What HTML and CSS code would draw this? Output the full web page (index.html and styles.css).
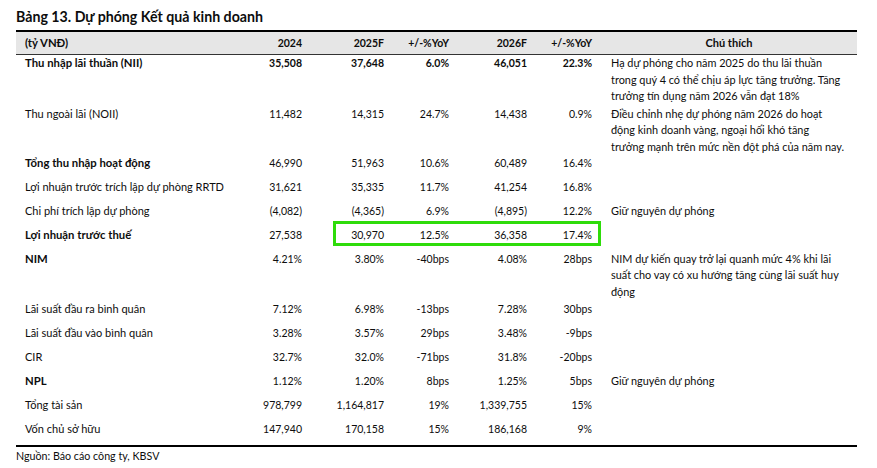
FILE: index.html
```html
<!DOCTYPE html>
<html lang="vi">
<head>
<meta charset="utf-8">
<title>Bảng 13. Dự phóng Kết quả kinh doanh</title>
<link rel="stylesheet" href="styles.css">
</head>
<body>
<div class="page">
  <h1 class="title">Bảng 13. Dự phóng Kết quả kinh doanh</h1>
  <div class="table">
    <div class="row head">
      <div class="c lab">(tỷ VNĐ)</div>
      <div class="c num">2024</div>
      <div class="c num">2025F</div>
      <div class="c num">+/-%YoY</div>
      <div class="c num">2026F</div>
      <div class="c num">+/-%YoY</div>
      <div class="c note center">Chú thích</div>
    </div>
    <div class="row multi bold">
      <div class="c lab b">Thu nhập lãi thuần (NII)</div>
      <div class="c num">35,508</div>
      <div class="c num">37,648</div>
      <div class="c num">6.0%</div>
      <div class="c num">46,051</div>
      <div class="c num">22.3%</div>
      <div class="c note">Hạ dự phóng cho năm 2025 do thu lãi thuần<br>trong quý 4 có thể chịu áp lực tăng trưởng. Tăng<br>trưởng tín dụng năm 2026 vẫn đạt 18%</div>
    </div>
    <div class="row multi tight">
      <div class="c lab">Thu ngoài lãi (NOII)</div>
      <div class="c num">11,482</div>
      <div class="c num">14,315</div>
      <div class="c num">24.7%</div>
      <div class="c num">14,438</div>
      <div class="c num">0.9%</div>
      <div class="c note">Điều chỉnh nhẹ dự phóng năm 2026 do hoạt<br>động kinh doanh vàng, ngoại hối khó tăng<br>trưởng mạnh trên mức nền đột phá của năm nay.</div>
    </div>
    <div class="row">
      <div class="c lab b">Tổng thu nhập hoạt động</div>
      <div class="c num">46,990</div>
      <div class="c num">51,963</div>
      <div class="c num">10.6%</div>
      <div class="c num">60,489</div>
      <div class="c num">16.4%</div>
      <div class="c note"></div>
    </div>
    <div class="row">
      <div class="c lab">Lợi nhuận trước trích lập dự phòng RRTD</div>
      <div class="c num">31,621</div>
      <div class="c num">35,335</div>
      <div class="c num">11.7%</div>
      <div class="c num">41,254</div>
      <div class="c num">16.8%</div>
      <div class="c note"></div>
    </div>
    <div class="row">
      <div class="c lab">Chi phí trích lập dự phòng</div>
      <div class="c num">(4,082)</div>
      <div class="c num">(4,365)</div>
      <div class="c num">6.9%</div>
      <div class="c num">(4,895)</div>
      <div class="c num">12.2%</div>
      <div class="c note">Giữ nguyên dự phóng</div>
    </div>
    <div class="row marked">
      <div class="c lab b">Lợi nhuận trước thuế</div>
      <div class="c num">27,538</div>
      <div class="c num">30,970</div>
      <div class="c num">12.5%</div>
      <div class="c num">36,358</div>
      <div class="c num">17.4%</div>
      <div class="c note"></div>
      <div class="highlight"></div>
    </div>
    <div class="row multi">
      <div class="c lab b">NIM</div>
      <div class="c num">4.21%</div>
      <div class="c num">3.80%</div>
      <div class="c num">-40bps</div>
      <div class="c num">4.08%</div>
      <div class="c num">28bps</div>
      <div class="c note">NIM dự kiến quay trở lại quanh mức 4% khi lãi<br>suất cho vay có xu hướng tăng cùng lãi suất huy<br>động</div>
    </div>
    <div class="row">
      <div class="c lab">Lãi suất đầu ra bình quân</div>
      <div class="c num">7.12%</div>
      <div class="c num">6.98%</div>
      <div class="c num">-13bps</div>
      <div class="c num">7.28%</div>
      <div class="c num">30bps</div>
      <div class="c note"></div>
    </div>
    <div class="row">
      <div class="c lab">Lãi suất đầu vào bình quân</div>
      <div class="c num">3.28%</div>
      <div class="c num">3.57%</div>
      <div class="c num">29bps</div>
      <div class="c num">3.48%</div>
      <div class="c num">-9bps</div>
      <div class="c note"></div>
    </div>
    <div class="row">
      <div class="c lab">CIR</div>
      <div class="c num">32.7%</div>
      <div class="c num">32.0%</div>
      <div class="c num">-71bps</div>
      <div class="c num">31.8%</div>
      <div class="c num">-20bps</div>
      <div class="c note"></div>
    </div>
    <div class="row">
      <div class="c lab b">NPL</div>
      <div class="c num">1.12%</div>
      <div class="c num">1.20%</div>
      <div class="c num">8bps</div>
      <div class="c num">1.25%</div>
      <div class="c num">5bps</div>
      <div class="c note">Giữ nguyên dự phóng</div>
    </div>
    <div class="row">
      <div class="c lab">Tổng tài sản</div>
      <div class="c num">978,799</div>
      <div class="c num">1,164,817</div>
      <div class="c num">19%</div>
      <div class="c num">1,339,755</div>
      <div class="c num">15%</div>
      <div class="c note"></div>
    </div>
    <div class="row last">
      <div class="c lab">Vốn chủ sở hữu</div>
      <div class="c num">147,940</div>
      <div class="c num">170,158</div>
      <div class="c num">15%</div>
      <div class="c num">186,168</div>
      <div class="c num">9%</div>
      <div class="c note"></div>
    </div>
  </div>
  <p class="source">Nguồn: Báo cáo công ty, KBSV</p>
</div>
</body>
</html>
```

FILE: styles.css
```css
* { box-sizing: border-box; }

html, body {
  margin: 0;
  padding: 0;
  background: #ffffff;
}

body {
  font-family: Lato, "Open Sans", "Noto Sans", sans-serif;
  color: #0d0d0d;
  font-size: 11px;
}

.page {
  width: 877px;
  padding: 7px 20px 0 16px;
}

.title {
  margin: 0 0 3px 0;
  font-size: 14.2px;
  line-height: 20px;
  font-weight: 700;
  color: #0d0d0d;
}

.table {
  width: 841px;
  border-top: 2px solid #000000;
  border-bottom: 2px solid #000000;
}

.row {
  display: grid;
  grid-template-columns: 214px 81px 82px 65px 78px 65px 256px;
  min-height: 24px;
  line-height: 16.6px;
  position: relative;
}

.row.head {
  background: #e6e6e6;
  height: 23px;
  min-height: 23px;
  align-items: center;
  font-weight: 700;
  border-bottom: 1px solid #333333;
}

.row.multi {
  padding-bottom: 1px;
}

.row.tight .note {
  margin-bottom: -2px;
}

.row.bold {
  font-weight: 700;
}

.c {
  white-space: nowrap;
}

.lab {
  padding-left: 9px;
}

.lab.b,
.row.head .lab {
  font-weight: 700;
  font-size: 11.3px;
}

.num {
  text-align: right;
  padding-right: 9px;
  font-size: 10.5px;
}

.note {
  padding-left: 10px;
  font-weight: 400;
  font-size: 10.9px;
}

.note.center {
  text-align: center;
  padding-left: 0;
  font-weight: 700;
  font-size: 11px;
}

.highlight {
  position: absolute;
  left: 317px;
  top: -6px;
  width: 268px;
  height: 25px;
  border: 3px solid #2edc0a;
  pointer-events: none;
}

.source {
  margin: 1px 0 0 0;
  font-size: 10.7px;
  line-height: 16px;
}
```
